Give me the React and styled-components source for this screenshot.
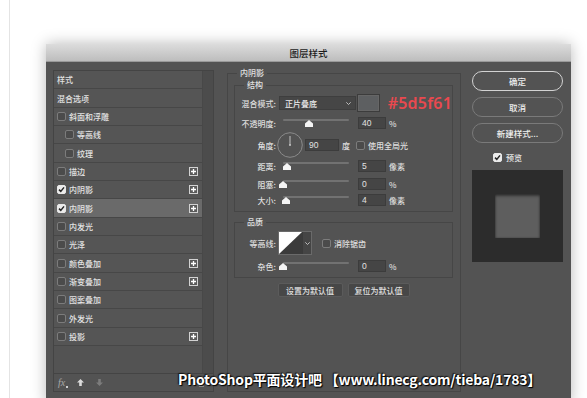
import styled, { createGlobalStyle } from "styled-components";

const GlobalStyle = createGlobalStyle`
  html, body {
    margin: 0;
    padding: 0;
    background: #ffffff;
    overflow: hidden;
  }
  body {
    font-family: "Noto Sans CJK SC", "Noto Sans", sans-serif;
  }
`;

const Page = styled.div`
  position: relative;
  width: 578px;
  height: 398px;
  box-sizing: border-box;
  margin-left: 9px;
  border-left: 1px solid #e4e4e4;
  padding: 44px 0 0 36px;
  overflow: hidden;
`;

const Dialog = styled.div`
  width: 525px;
  height: 360px;
  background: #535353;
  box-shadow: 0 0 14px rgba(0, 0, 0, 0.28);
  display: flex;
  flex-direction: column;
  font-weight: 500;
`;

const TitleBar = styled.div`
  height: 18px;
  flex: none;
  box-sizing: border-box;
  background: linear-gradient(#dcdcdc, #bdbdbd);
  border-bottom: 1px solid #9a9a9a;
  display: flex;
  align-items: center;
  justify-content: center;
  font-size: 9.5px;
  color: #1c1c1c;
`;

const Body = styled.div`
  flex: 1;
  display: flex;
  align-items: flex-start;
  padding: 0 8px 0 7px;
`;

/* ---------- left: style list ---------- */

const ListBox = styled.div`
  margin-top: 8px;
  width: 161px;
  height: 322px;
  box-sizing: border-box;
  border: 1px solid #444444;
  display: grid;
  grid-template-columns: 1fr 11px;
  grid-template-rows: 1fr 18px;
`;

const Items = styled.div`
  display: flex;
  flex-direction: column;
`;

const Item = styled.div`
  height: 18.35px;
  flex: none;
  box-sizing: border-box;
  border-bottom: 1px solid #474747;
  background: ${(p) => (p.$active ? "#6a6a6a" : "#555555")};
  display: flex;
  align-items: center;
  padding-left: ${(p) => (p.$indent ? 11 : 3)}px;
  padding-right: 4px;
  font-size: 8px;
  color: #e2e2e2;
  white-space: nowrap;
`;

const ItemText = styled.span`
  flex: 1;
`;

const ScrollTrack = styled.div`
  background: #4c4c4c;
  border-left: 1px solid #484848;
`;

const ListFooter = styled.div`
  grid-column: 1 / 3;
  border-top: 1px solid #444444;
  display: flex;
  align-items: center;
  padding-left: 4px;
  gap: 12px;
`;

const Fx = styled.span`
  font-family: "Liberation Serif", serif;
  font-style: italic;
  font-size: 10px;
  color: #a8a8a8;
  position: relative;
  &::after {
    content: "";
    position: absolute;
    right: -3px;
    bottom: 0;
    width: 2px;
    height: 2px;
    background: #cfcfcf;
  }
`;

const Trash = styled.svg`
  margin-left: auto;
  margin-right: 8px;
`;

const CheckWrap = styled.span`
  width: 9px;
  height: 9px;
  flex: none;
  box-sizing: border-box;
  border-radius: 2px;
  border: 1px solid ${(p) => (p.$on ? "#e8e8e8" : "#7c7c7c")};
  background: ${(p) => (p.$on ? "#ececec" : "#4b4b4b")};
  margin-right: ${(p) => p.$gap ?? 3}px;
  margin-left: ${(p) => p.$left ?? 0}px;
  display: inline-flex;
  align-items: center;
  justify-content: center;
`;

function Check({ on, gap, left }) {
  return (
    <CheckWrap $on={on} $gap={gap} $left={left}>
      {on && (
        <svg width="7" height="7" viewBox="0 0 7 7">
          <path d="M1 3.6 L2.8 5.4 L6 1.4" fill="none" stroke="#262626" strokeWidth="1.5" />
        </svg>
      )}
    </CheckWrap>
  );
}

function Plus() {
  return (
    <svg width="9" height="9" viewBox="0 0 9 9">
      <rect x="0.5" y="0.5" width="8" height="8" fill="#5a5a5a" stroke="#d2d2d2" />
      <path d="M4.5 2 V7 M2 4.5 H7" stroke="#ffffff" strokeWidth="1.3" />
    </svg>
  );
}

const styles = [
  { name: "样式", noCheck: true },
  { name: "混合选项", noCheck: true },
  { name: "斜面和浮雕" },
  { name: "等高线", indent: true },
  { name: "纹理", indent: true },
  { name: "描边", plus: true },
  { name: "内阴影", plus: true, on: true },
  { name: "内阴影", plus: true, on: true, active: true },
  { name: "内发光" },
  { name: "光泽" },
  { name: "颜色叠加", plus: true },
  { name: "渐变叠加", plus: true },
  { name: "图案叠加" },
  { name: "外发光" },
  { name: "投影", plus: true },
];

/* ---------- middle: settings ---------- */

const Middle = styled.div`
  margin: 6px 11px 0 13px;
  width: 234px;
`;

const Group = styled.fieldset`
  margin: ${(p) => p.$mt ?? 0}px 0 0;
  min-width: 0;
  box-sizing: border-box;
  border: 1px solid #464646;
  padding: ${(p) => p.$pad};
  height: ${(p) => (p.$h ? `${p.$h}px` : "auto")};
`;

const Legend = styled.legend`
  padding: 0 3px;
  margin-left: ${(p) => p.$offset}px;
  font-size: 8px;
  line-height: 10px;
  color: #e0e0e0;
`;

const Row = styled.div`
  display: flex;
  align-items: center;
  height: ${(p) => p.$h}px;
  margin-top: ${(p) => p.$mt ?? 0}px;
  font-size: 8px;
  color: #dedede;
  white-space: nowrap;
`;

const Label = styled.span`
  width: 41px;
  flex: none;
  text-align: right;
`;

const Select = styled.div`
  margin-left: 3px;
  width: 83px;
  height: 14px;
  box-sizing: border-box;
  background: #464646;
  border: 1px solid #3e3e3e;
  display: flex;
  align-items: center;
  justify-content: space-between;
  padding: 0 4px 0 5px;
  color: #ececec;
`;

const Swatch = styled.div`
  margin-left: 1px;
  width: 24px;
  height: 18px;
  box-sizing: border-box;
  background: #5d5f61;
  border: 1px solid #3c3c3c;
  box-shadow: inset 0 0 0 1px #666;
`;

const HexNote = styled.span`
  margin-left: 8px;
  font-family: "Noto Sans", sans-serif;
  font-size: 16px;
  font-weight: 600;
  color: #e9494f;
  letter-spacing: 0.2px;
`;

const Slider = styled.div`
  position: relative;
  flex: none;
  width: 66px;
  height: 9px;
  margin-left: 7px;
  &::before {
    content: "";
    position: absolute;
    left: 0;
    right: 0;
    top: 0;
    height: 2px;
    border-radius: 1px;
    background: #727272;
  }
`;

const Thumb = styled.svg`
  position: absolute;
  top: 1px;
  left: ${(p) => p.$pos - 4}px;
`;

function Range({ pos }) {
  return (
    <Slider>
      <Thumb $pos={pos} width="8" height="7" viewBox="0 0 8 7">
        <polygon points="4,0 8,3.5 8,7 0,7 0,3.5" fill="#f4f4f4" />
      </Thumb>
    </Slider>
  );
}

const Field = styled.div`
  flex: none;
  margin-left: ${(p) => p.$ml ?? 9}px;
  width: ${(p) => p.$w ?? 28}px;
  height: 12px;
  box-sizing: border-box;
  background: #454545;
  border: 1px solid #3c3c3c;
  padding-left: 3px;
  font-family: "Liberation Sans", sans-serif;
  font-weight: 400;
  font-size: 8.5px;
  line-height: 10px;
  color: #e2e2e2;
`;

const Unit = styled.span`
  margin-left: ${(p) => p.$ml ?? 3}px;
`;

const Dial = styled.svg`
  flex: none;
  margin-left: 1px;
`;

const Contour = styled.div`
  margin-left: 2px;
  display: flex;
  height: 24px;
  box-sizing: border-box;
  border: 1px solid #6a6a6a;
`;

const ContourArrow = styled.div`
  width: 8px;
  background: #454545;
  border-left: 1px solid #3a3a3a;
  display: flex;
  align-items: center;
  justify-content: center;
`;

const ButtonRow = styled.div`
  margin-top: 5px;
  display: flex;
  justify-content: center;
  gap: 5px;
`;

const FlatButton = styled.div`
  width: ${(p) => p.$w}px;
  height: 14px;
  box-sizing: border-box;
  background: #474747;
  border: 1px solid #5b5b5b;
  border-radius: 2px;
  display: flex;
  align-items: center;
  justify-content: center;
  font-size: 8px;
  color: #e0e0e0;
`;

function Chevron() {
  return (
    <svg width="5" height="3" viewBox="0 0 5 3">
      <path d="M0.3 0.3 L2.5 2.5 L4.7 0.3" fill="none" stroke="#c8c8c8" strokeWidth="0.9" />
    </svg>
  );
}

/* ---------- right: actions + preview ---------- */

const Right = styled.div`
  margin-top: 9px;
  width: 91px;
  display: flex;
  flex-direction: column;
`;

const Pill = styled.div`
  height: 20px;
  margin-top: ${(p) => p.$mt ?? 0}px;
  box-sizing: border-box;
  border-radius: 11px;
  border: 1px solid ${(p) => (p.$primary ? "#d2d2d2" : "#7a7a7a")};
  display: flex;
  align-items: center;
  justify-content: center;
  font-size: 8.5px;
  color: #eeeeee;
`;

const PreviewCheck = styled.div`
  margin-top: 8px;
  height: 12px;
  padding-left: 21px;
  display: flex;
  align-items: center;
  font-size: 8px;
  color: #e4e4e4;
`;

const PreviewBox = styled.div`
  margin-top: 7px;
  height: 92px;
  background: #2c2c2c;
  display: flex;
  align-items: center;
  justify-content: center;
`;

const PreviewSquare = styled.div`
  width: 45px;
  height: 44px;
  background: #5e5e5e;
  box-shadow: inset 0 2px 3px rgba(0, 0, 0, 0.45), inset 0 0 2px rgba(0, 0, 0, 0.35);
`;

const Watermark = styled.div`
  position: absolute;
  left: 168px;
  top: 370px;
  font-family: "Noto Sans CJK SC", "Noto Sans", sans-serif;
  font-weight: 700;
  font-size: 14px;
  line-height: 18px;
  letter-spacing: -0.2px;
  color: #ffffff;
  white-space: nowrap;
  text-shadow: 0 0 2px #000, 1px 1px 1px #000, -1px -1px 1px rgba(0, 0, 0, 0.6);
`;

export default function App() {
  return (
    <Page>
      <GlobalStyle />
      <Dialog>
        <TitleBar>图层样式</TitleBar>
        <Body>
          <ListBox>
            <Items>
              {styles.map((s, i) => (
                <Item key={i} $indent={s.indent} $active={s.active}>
                  {!s.noCheck && <Check on={s.on} />}
                  <ItemText>{s.name}</ItemText>
                  {s.plus && <Plus />}
                </Item>
              ))}
            </Items>
            <ScrollTrack />
            <ListFooter>
              <Fx>fx</Fx>
              <svg width="7" height="7" viewBox="0 0 7 7">
                <path d="M3.5 0 L7 3.5 H4.8 V7 H2.2 V3.5 H0 Z" fill="#dcdcdc" />
              </svg>
              <svg width="7" height="7" viewBox="0 0 7 7">
                <path d="M3.5 7 L7 3.5 H4.8 V0 H2.2 V3.5 H0 Z" fill="#7c7c7c" />
              </svg>
              <Trash width="7" height="8" viewBox="0 0 7 8">
                <path d="M0 1.5 H7 M2.5 1.5 V0.5 H4.5 V1.5 M1 2 H6 L5.6 8 H1.4 Z" fill="#9a9a9a" stroke="#9a9a9a" strokeWidth="0.6" />
              </Trash>
            </ListFooter>
          </ListBox>

          <Middle>
            <Group $pad="2px 7px 0 6px" $h={324}>
              <Legend $offset={3}>内阴影</Legend>
              <Group $pad="4px 0 3px 0">
                <Legend $offset={9}>结构</Legend>
                <Row $h={18}>
                  <Label>混合模式:</Label>
                  <Select>
                    <span>正片叠底</span>
                    <Chevron />
                  </Select>
                  <Swatch />
                  <HexNote>#5d5f61</HexNote>
                </Row>
                <Row $h={22}>
                  <Label>不透明度:</Label>
                  <Range pos={26} />
                  <Field>40</Field>
                  <Unit>%</Unit>
                </Row>
                <Row $h={22}>
                  <Label>角度:</Label>
                  <Dial width="26" height="26" viewBox="0 0 26 26">
                    <circle cx="13" cy="13" r="12.3" fill="none" stroke="#8a8a8a" strokeWidth="1" />
                    <path d="M13 13 V4" stroke="#c4c4c4" strokeWidth="1" />
                    <circle cx="13" cy="13" r="1" fill="#c4c4c4" />
                  </Dial>
                  <Field $ml={2} $w={34}>90</Field>
                  <Unit>度</Unit>
                  <Check gap={3} left={6} />
                  <span>使用全局光</span>
                </Row>
                <Row $h={20}>
                  <Label>距离:</Label>
                  <Range pos={4} />
                  <Field>5</Field>
                  <Unit>像素</Unit>
                </Row>
                <Row $h={16}>
                  <Label>阻塞:</Label>
                  <Range pos={0} />
                  <Field>0</Field>
                  <Unit>%</Unit>
                </Row>
                <Row $h={16}>
                  <Label>大小:</Label>
                  <Range pos={3} />
                  <Field>4</Field>
                  <Unit>像素</Unit>
                </Row>
              </Group>

              <Group $mt={5} $pad="4px 0 2px 0">
                <Legend $offset={9}>品质</Legend>
                <Row $h={24}>
                  <Label>等高线:</Label>
                  <Contour>
                    <svg width="23" height="22" viewBox="0 0 23 22">
                      <rect width="23" height="22" fill="#3b3b3b" />
                      <polygon points="0,0 23,0 0,22" fill="#ffffff" />
                    </svg>
                    <ContourArrow>
                      <Chevron />
                    </ContourArrow>
                  </Contour>
                  <Check gap={3} left={10} />
                  <span>消除锯齿</span>
                </Row>
                <Row $h={18} $mt={2}>
                  <Label>杂色:</Label>
                  <Range pos={0} />
                  <Field>0</Field>
                  <Unit>%</Unit>
                </Row>
              </Group>

              <ButtonRow>
                <FlatButton $w={65}>设置为默认值</FlatButton>
                <FlatButton $w={62}>复位为默认值</FlatButton>
              </ButtonRow>
            </Group>
          </Middle>

          <Right>
            <Pill $primary>确定</Pill>
            <Pill $mt={6}>取消</Pill>
            <Pill $mt={6}>新建样式...</Pill>
            <PreviewCheck>
              <Check on gap={4} />
              <span>预览</span>
            </PreviewCheck>
            <PreviewBox>
              <PreviewSquare />
            </PreviewBox>
          </Right>
        </Body>
      </Dialog>
      <Watermark>PhotoShop平面设计吧 【www.linecg.com/tieba/1783】</Watermark>
    </Page>
  );
}
